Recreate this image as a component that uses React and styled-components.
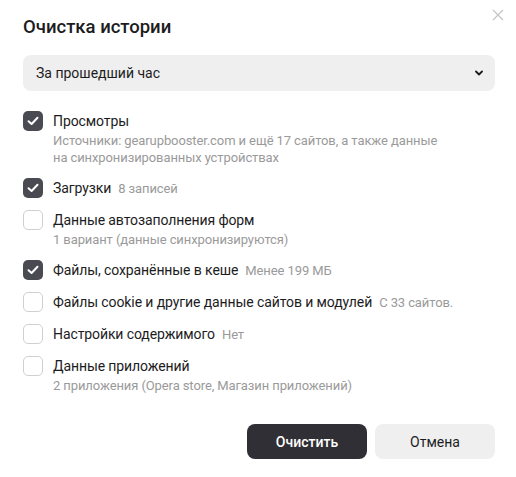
import React from 'react';
import styled, { createGlobalStyle } from 'styled-components';

const Global = createGlobalStyle`
  body {
    margin: 0;
    background: #fff;
    font-family: Roboto, "Noto Sans", Arial, sans-serif;
    color: #1c1c1e;
  }
`;

const Dialog = styled.div`
  position: relative;
  width: 516px;
  height: 477px;
  box-sizing: border-box;
  padding: 15px 21px 0 23px;
  display: flex;
  flex-direction: column;
`;

const Close = styled.button`
  position: absolute;
  top: 9px;
  right: 11px;
  width: 14px;
  height: 14px;
  padding: 0;
  border: 0;
  background: none;
  cursor: pointer;
`;

const Title = styled.h1`
  margin: 0;
  font-size: 18.5px;
  font-weight: 500;
  line-height: 24px;
  color: #1c1c1e;
`;

const Select = styled.div`
  margin-top: 16px;
  height: 36px;
  border-radius: 8px;
  background: #efefef;
  display: flex;
  align-items: center;
  justify-content: space-between;
  padding: 0 12px 0 13px;
  font-size: 14px;
`;

const List = styled.div`
  margin-top: 20px;
  display: flex;
  flex-direction: column;
  gap: 12px;
`;

const Item = styled.label`
  display: flex;
  align-items: flex-start;
  gap: 10px;
  cursor: pointer;
`;

const Box = styled.span`
  flex: none;
  width: 20px;
  height: 20px;
  box-sizing: border-box;
  border-radius: 5px;
  border: ${p => (p.$checked ? 'none' : '1px solid #d0d0d0')};
  background: ${p => (p.$checked ? '#4a4a52' : '#fff')};
  display: flex;
  align-items: center;
  justify-content: center;
`;

const Content = styled.div`
  display: flex;
  flex-direction: column;
`;

const Label = styled.div`
  height: 20px;
  font-size: 14px;
  line-height: 20px;
  letter-spacing: -0.1px;
  color: #1c1c1e;
`;

const Note = styled.span`
  margin-left: 7px;
  font-size: 13px;
  line-height: 1;
  color: #9a9a9a;
`;

const Sub = styled.div`
  max-width: 390px;
  margin-top: 1px;
  font-size: 13px;
  line-height: 17px;
  letter-spacing: -0.1px;
  color: #9a9a9a;
`;

const Actions = styled.div`
  margin-top: 30px;
  display: flex;
  justify-content: flex-end;
  gap: 8px;
`;

const Button = styled.button`
  width: 120px;
  height: 35px;
  border: 0;
  border-radius: 8px;
  font-family: inherit;
  font-size: 14px;
  font-weight: ${p => (p.$primary ? 500 : 400)};
  background: ${p => (p.$primary ? '#2f2f35' : '#efefef')};
  color: ${p => (p.$primary ? '#fff' : '#1c1c1e')};
  cursor: pointer;
`;

const items = [
  {
    label: 'Просмотры',
    checked: true,
    sub: 'Источники: gearupbooster.com и ещё 17 сайтов, а также данные на синхронизированных устройствах',
  },
  { label: 'Загрузки', checked: true, note: '8 записей' },
  { label: 'Данные автозаполнения форм', sub: '1 вариант (данные синхронизируются)' },
  { label: 'Файлы, сохранённые в кеше', checked: true, note: 'Менее 199 МБ' },
  { label: 'Файлы cookie и другие данные сайтов и модулей', note: 'С 33 сайтов.' },
  { label: 'Настройки содержимого', note: 'Нет' },
  { label: 'Данные приложений', sub: '2 приложения (Opera store, Магазин приложений)' },
];

function Check() {
  return (
    <svg width="12" height="10" viewBox="0 0 12 10">
      <path d="M1.5 5.2 L4.6 8 L10.5 1.8" fill="none" stroke="#fff" strokeWidth="2" strokeLinecap="round" strokeLinejoin="round" />
    </svg>
  );
}

export default function App() {
  return (
    <>
      <Global />
      <Dialog>
        <Close aria-label="Закрыть">
          <svg width="12" height="12" viewBox="0 0 12 12">
            <path d="M1 1 L11 11 M11 1 L1 11" stroke="#c4c4c4" strokeWidth="1.2" />
          </svg>
        </Close>
        <Title>Очистка истории</Title>
        <Select>
          <span>За прошедший час</span>
          <svg width="8" height="6" viewBox="0 0 8 6">
            <path d="M1 1.5 L4 4.5 L7 1.5" fill="none" stroke="#1c1c1e" strokeWidth="1.8" strokeLinecap="round" strokeLinejoin="round" />
          </svg>
        </Select>
        <List>
          {items.map(it => (
            <Item key={it.label}>
              <Box $checked={it.checked}>{it.checked && <Check />}</Box>
              <Content>
                <Label>
                  {it.label}
                  {it.note && <Note>{it.note}</Note>}
                </Label>
                {it.sub && <Sub>{it.sub}</Sub>}
              </Content>
            </Item>
          ))}
        </List>
        <Actions>
          <Button $primary>Очистить</Button>
          <Button>Отмена</Button>
        </Actions>
      </Dialog>
    </>
  );
}
